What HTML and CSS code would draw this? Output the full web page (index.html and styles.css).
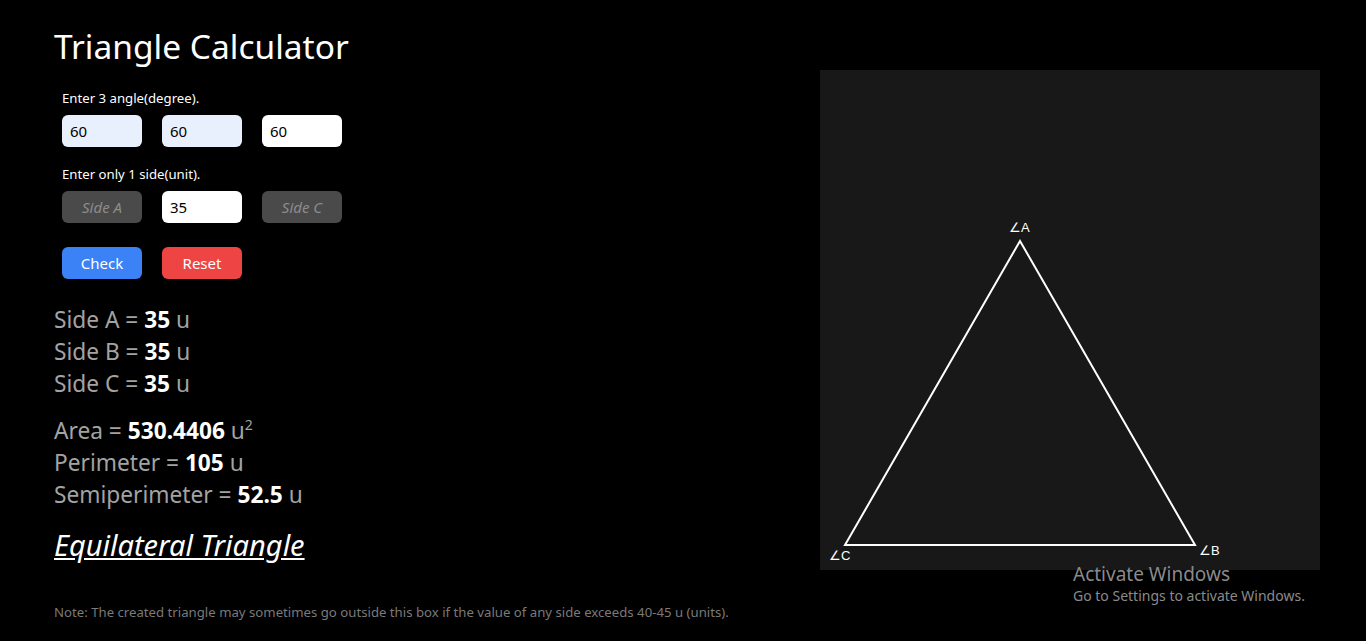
FILE: index.html
```html
<!DOCTYPE html>
<html lang="en">
<head>
  <meta charset="UTF-8" />
  <meta name="viewport" content="width=device-width, initial-scale=1.0" />
  <title>Triangle Calculator</title>
  <link rel="stylesheet" href="styles.css">
</head>
<body>
  <div class="page">
    <div class="left">
      <h1 class="title">Triangle Calculator</h1>
      <div class="form">
        <div class="hint">Enter 3 angle(degree).</div>
        <div class="row">
          <input class="field filled" type="text" value="60">
          <input class="field filled" type="text" value="60">
          <input class="field" type="text" value="60">
        </div>
        <div class="hint">Enter only 1 side(unit).</div>
        <div class="row">
          <input class="field off" type="text" placeholder="Side A" disabled>
          <input class="field" type="text" value="35">
          <input class="field off" type="text" placeholder="Side C" disabled>
        </div>
        <div class="row buttons">
          <button class="btn check">Check</button>
          <button class="btn reset">Reset</button>
        </div>
      </div>
      <div class="results">
        <div class="group">
          <div>Side A = <b>35</b> u</div>
          <div>Side B = <b>35</b> u</div>
          <div>Side C = <b>35</b> u</div>
        </div>
        <div class="group">
          <div>Area = <b>530.4406</b> u<sup>2</sup></div>
          <div>Perimeter = <b>105</b> u</div>
          <div>Semiperimeter = <b>52.5</b> u</div>
        </div>
        <div class="kind">Equilateral Triangle</div>
      </div>
      <p class="note">Note: The created triangle may sometimes go outside this box if the value of any side exceeds 40-45 u (units).</p>
    </div>
    <div class="right">
      <svg class="canvas" width="500" height="500" viewBox="0 0 500 500">
        <rect width="500" height="500" fill="#181818"/>
        <polygon points="200,171 375,475 25,475" fill="none" stroke="#fff" stroke-width="2"/>
        <text x="189" y="162">∠A</text>
        <text x="379" y="485">∠B</text>
        <text x="9" y="490">∠C</text>
      </svg>
    </div>
  </div>
  <div class="activate">
    <div class="big">Activate Windows</div>
    <div class="small">Go to Settings to activate Windows.</div>
  </div>
</body>
</html>
```

FILE: styles.css
```css
body {
  margin: 0;
  background: #000;
  color: #fff;
  font-family: "Noto Sans", "Open Sans", sans-serif;
  height: 641px;
  overflow: hidden;
}
.page {
  display: flex;
  justify-content: space-between;
  padding: 0 46px 0 54px;
}
.title {
  font-size: 33.5px;
  font-weight: normal;
  margin: 25px 0 0;
  line-height: 42px;
}
.form {
  padding: 23px 0 0 8px;
}
.hint {
  font-size: 13.2px;
  line-height: 16px;
  margin-bottom: 9px;
}
.row {
  display: flex;
  gap: 20px;
  margin-bottom: 19px;
}
.field {
  width: 80px;
  height: 32px;
  box-sizing: border-box;
  border: none;
  border-radius: 6px;
  padding: 0 8px;
  font-family: inherit;
  font-size: 15px;
  color: #000;
  background: #fff;
}
.field.filled {
  background: #e8f0fe;
}
.field.off {
  background: #4a4a4a;
}
.field.off::placeholder {
  color: #8c8c8c;
  font-style: italic;
  text-align: center;
}
.buttons {
  margin-top: 24px;
}
.btn {
  width: 80px;
  height: 32px;
  border: none;
  border-radius: 6px;
  color: #fff;
  font-family: inherit;
  font-size: 15px;
}
.check {
  background: #3b82f6;
}
.reset {
  background: #ef4444;
}
.results {
  margin-top: 25px;
  font-size: 22.7px;
  line-height: 32px;
  color: #a3a3a3;
}
.results b {
  color: #fff;
}
.results sup {
  font-size: 14px;
  line-height: 0;
}
.group {
  margin-bottom: 15px;
}
.kind {
  margin-top: 0;
  font-size: 29px;
  line-height: 38px;
  font-style: italic;
  color: #fff;
  text-decoration: underline;
}
.note {
  margin: 39px 0 0;
  font-size: 13.2px;
  color: #7a7a7a;
}
.right {
  padding-top: 70px;
}
.canvas {
  display: block;
}
.canvas text {
  fill: #fff;
  font-family: "Liberation Sans", sans-serif;
  font-size: 13px;
}
.activate {
  position: absolute;
  left: 1073px;
  top: 562px;
  color: #8a8a8a;
}
.activate .big {
  font-size: 19px;
  line-height: 24px;
}
.activate .small {
  font-size: 14px;
  line-height: 20px;
}
```
